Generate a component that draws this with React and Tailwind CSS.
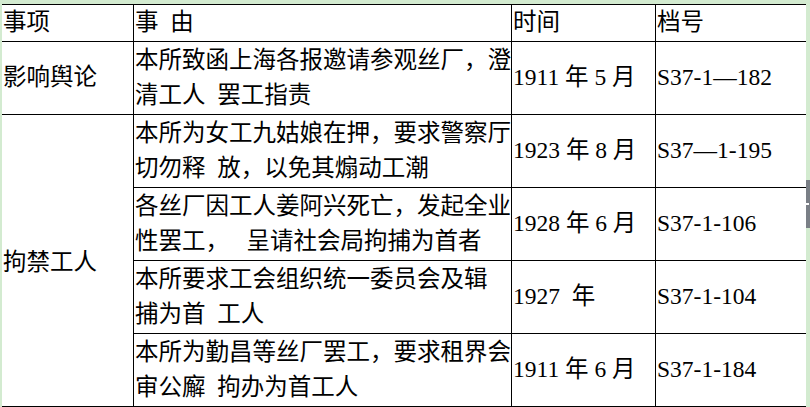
import React from "react";

const rows = [
  {
    lines: ["本所为女工九姑娘在押，要求警察厅", "切勿释\u2002放，以免其煽动工潮"],
    time: "1923 年 8 月",
    code: "S37—1-195",
  },
  {
    lines: ["各丝厂因工人姜阿兴死亡，发起全业", "性罢工，\u2002 呈请社会局拘捕为首者"],
    time: "1928 年 6 月",
    code: "S37-1-106",
  },
  {
    lines: ["本所要求工会组织统一委员会及辑", "捕为首\u2002工人"],
    time: "1927\u2002年",
    code: "S37-1-104",
  },
  {
    lines: ["本所为勤昌等丝厂罢工，要求租界会", "审公廨\u2002拘办为首工人"],
    time: "1911 年 6 月",
    code: "S37-1-184",
  },
];

const cell = "border-b border-black flex items-center whitespace-pre";

const Lines = ({ lines }) => (
  <div className="flex flex-col leading-[35px]">
    {lines.map((l) => (
      <span key={l}>{l}</span>
    ))}
  </div>
);

export default function App() {
  return (
    <div
      className="relative w-[810px] h-[407px] bg-[#d3ebd0] pt-[4px] pl-[2px] pr-[4px] overflow-hidden text-black text-[23.5px]"
      style={{ fontFamily: '"Liberation Serif", "Noto Sans CJK SC", serif' }}
    >
      <div className="bg-white h-full">
        <div className="grid grid-cols-[132px_378px_144px_1fr] grid-rows-[37px_73px_73px_73px_73px_73px] border-t border-black">
          <div className={`${cell} border-r pl-[1px]`}>事项</div>
          <div className={`${cell} border-r pl-[1px]`}>事{"\u2002"}由</div>
          <div className={`${cell} border-r pl-[1px]`}>时间</div>
          <div className={`${cell} pl-[1px]`}>档号</div>

          <div className={`${cell} border-r pl-[1px]`}>影响舆论</div>
          <div className={`${cell} border-r pl-[1px]`}>
            <Lines lines={["本所致函上海各报邀请参观丝厂，澄", "清工人\u2002罢工指责"]} />
          </div>
          <div className={`${cell} border-r pl-[1px]`}>1911 年 5 月</div>
          <div className={`${cell} pl-[1px]`}>S37-1—182</div>

          <div className={`${cell} border-r pl-[1px] row-span-4 pt-[4px]`}>拘禁工人</div>
          {rows.map((r) => (
            <React.Fragment key={r.code}>
              <div className={`${cell} border-r pl-[1px]`}>
                <Lines lines={r.lines} />
              </div>
              <div className={`${cell} border-r pl-[1px]`}>{r.time}</div>
              <div className={`${cell} pl-[1px]`}>{r.code}</div>
            </React.Fragment>
          ))}
        </div>
      </div>
      <div className="absolute right-0 top-[180px] w-[4px] h-[48px] bg-[#7a7f86] flex items-center">
        <div className="w-[3px] h-[2px] bg-white" />
      </div>
    </div>
  );
}
